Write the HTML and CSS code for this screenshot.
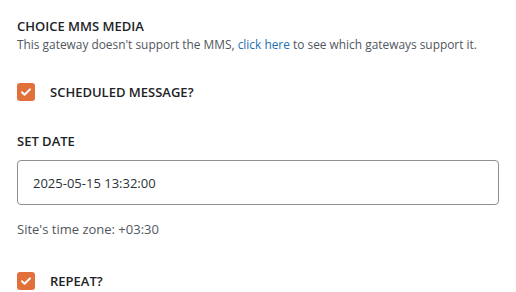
FILE: index.html
```html
<!DOCTYPE html>
<html lang="en">
<head>
    <meta charset="UTF-8">
    <meta name="viewport" content="width=device-width, initial-scale=1.0">
    <title>Scheduled Message</title>
    <link rel="stylesheet" href="styles.css">
</head>
<body>
    <div class="panel">
        <div class="field">
            <h3 class="field-title">CHOICE MMS MEDIA</h3>
            <p class="description">This gateway doesn't support the MMS, <a href="#">click here</a> to see which gateways support it.</p>
        </div>

        <label class="check-row scheduled">
            <span class="checkbox">
                <svg viewBox="0 0 18 18" width="18" height="18"><path d="M5 9.2l2.6 2.6L13 6.4" fill="none" stroke="#fff" stroke-width="2" stroke-linecap="round" stroke-linejoin="round"/></svg>
            </span>
            <span class="check-label">SCHEDULED MESSAGE?</span>
        </label>

        <div class="field">
            <label class="field-title" for="schedule_date">SET DATE</label>
            <input type="text" id="schedule_date" class="date-input" value="2025-05-15 13:32:00">
            <p class="timezone">Site's time zone: +03:30</p>
        </div>

        <label class="check-row repeat">
            <span class="checkbox">
                <svg viewBox="0 0 18 18" width="18" height="18"><path d="M5 9.2l2.6 2.6L13 6.4" fill="none" stroke="#fff" stroke-width="2" stroke-linecap="round" stroke-linejoin="round"/></svg>
            </span>
            <span class="check-label">REPEAT?</span>
        </label>
    </div>
</body>
</html>
```

FILE: styles.css
```css
body {
    margin: 0;
    background-color: #fff;
    font-family: 'Open Sans', 'Noto Sans', sans-serif;
    color: #1d2327;
}
.panel {
    padding: 17px 17px 0 17px;
}
.field-title {
    display: block;
    margin: 0;
    font-size: 13px;
    font-weight: 600;
    line-height: 18px;
    color: #1d2327;
}
.description {
    margin: 1px 0 0 0;
    font-size: 11.9px;
    line-height: 16px;
    color: #50575e;
}
.description a {
    color: #2271b1;
    text-decoration: none;
}
.check-row {
    display: flex;
    align-items: center;
    gap: 15px;
}
.check-row.scheduled {
    margin: 31px 0 31px 0;
}
.check-row.repeat {
    margin: 34px 0 0 0;
}
.checkbox {
    width: 18px;
    height: 18px;
    border-radius: 3px;
    background-color: #e2703a;
    display: flex;
}
.check-label {
    font-size: 13px;
    font-weight: 600;
    color: #1d2327;
}
.date-input {
    display: block;
    box-sizing: border-box;
    width: 100%;
    height: 45px;
    margin-top: 10px;
    padding: 0 15px;
    border: 1px solid #8c8f94;
    border-radius: 4px;
    font-family: inherit;
    font-size: 13px;
    color: #2c3338;
}
.timezone {
    margin: 15px 0 0 0;
    font-size: 13px;
    color: #50575e;
}
```
